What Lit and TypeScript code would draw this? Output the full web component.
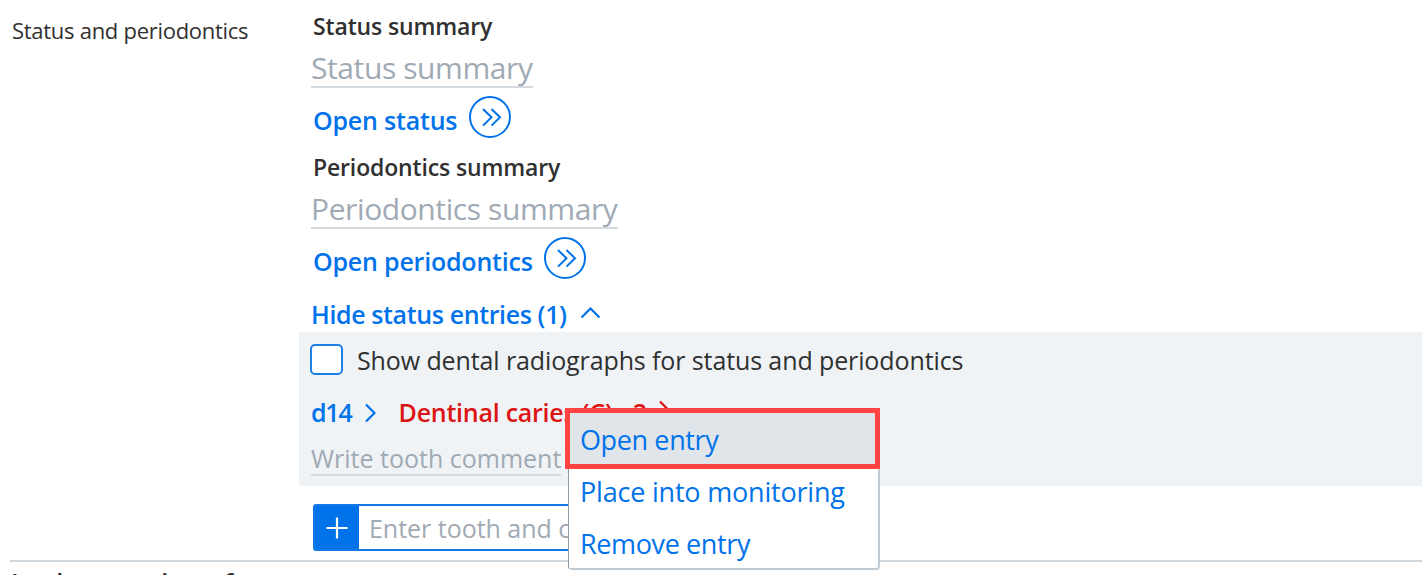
import { LitElement, html, css, svg } from 'lit';
import { customElement, property, state } from 'lit/decorators.js';

const CHEVRONS = {
  right: svg`<path d="M2 1.5 L10.5 10 L2 18.5" />`,
  up: svg`<path d="M1.5 10.5 L10.5 1.5 L19.5 10.5" />`,
};

@customElement('open-link')
export class OpenLink extends LitElement {
  @property() label = '';

  static styles = css`
    :host {
      display: flex;
      height: 42px;
      margin-top: 8px;
      padding-left: 2px;
      color: #0073ea;
    }
    .label {
      font-size: 25px;
      font-weight: 600;
      line-height: 48px;
      letter-spacing: -0.2px;
      margin-right: 11.5px;
      white-space: nowrap;
    }
    .icon {
      width: 42px;
      height: 42px;
      fill: none;
      stroke: currentColor;
      stroke-width: 2;
    }
  `;

  render() {
    return html`
      <span class="label">${this.label}</span>
      <svg class="icon" viewBox="0 0 42 42">
        <circle cx="21" cy="21" r="20" />
        <path d="M14 13 L22.5 21.3 L14 29.6 M22.5 13 L31 21.3 L22.5 29.6" />
      </svg>
    `;
  }
}

@customElement('entry-menu')
export class EntryMenu extends LitElement {
  @property({ type: Array }) items: string[] = [];
  @property({ type: Number }) active = 0;

  static styles = css`
    :host {
      display: block;
      box-sizing: border-box;
      background: #fff;
      border: 1px solid #c3cbd2;
      border-width: 1px 2px 2px 1px;
      border-left-color: #8d99a4;
      border-radius: 4px;
    }
    .item {
      height: 52px;
      padding-left: 11px;
      font-size: 27px;
      line-height: 46px;
      letter-spacing: -0.38px;
      color: #0073ea;
      white-space: nowrap;
    }
    .item.active {
      box-sizing: border-box;
      height: 61px;
      margin: -1px -2px 0 -4px;
      padding-left: 10px;
      line-height: 54px;
      background: #e0e5e9;
      border: 5px solid #ff4343;
    }
    .item.wide {
      letter-spacing: -0.2px;
    }
  `;

  render() {
    return this.items.map(
      (item, i) => html`<div class="item ${i === this.active ? 'active' : ''} ${item.length > 15 ? 'wide' : ''}">${item}</div>`
    );
  }
}

@customElement('app-root')
export class AppRoot extends LitElement {
  @state() private entries = 1;

  static styles = css`
    :host {
      display: block;
      position: relative;
      height: 575px;
      overflow: hidden;
      background: #fff;
      color: #303030;
      font-family: 'Open Sans', 'Noto Sans', sans-serif;
    }
    .section {
      display: grid;
      grid-template-columns: 289px 1fr;
      box-sizing: border-box;
      height: 562px;
      margin-left: 10px;
      border-bottom: 2px solid #d2dae0;
    }
    .section-label {
      padding: 15px 0 0 2px;
      font-size: 22px;
      line-height: 30px;
      letter-spacing: -0.28px;
      white-space: nowrap;
    }
    .content {
      min-width: 0;
    }
    .group {
      padding: 10px 0 0 12px;
    }
    .group + .group {
      padding-top: 13px;
    }
    .heading {
      padding-left: 2px;
      font-size: 23px;
      font-weight: 600;
      line-height: 32px;
      letter-spacing: -0.15px;
    }
    .summary {
      width: fit-content;
      height: 38px;
      margin-top: 6px;
      border-bottom: 2px solid #d3dae0;
      font-size: 30px;
      line-height: 40px;
      letter-spacing: -0.4px;
      color: #9faab4;
      white-space: nowrap;
    }
    .toggle {
      display: flex;
      align-items: center;
      gap: 13px;
      margin-top: 18px;
      padding-left: 12px;
      font-size: 25px;
      font-weight: 600;
      line-height: 35px;
      letter-spacing: -0.38px;
      color: #0073ea;
    }
    .chevron {
      fill: none;
      stroke: currentColor;
      stroke-width: 2.2;
    }
    .panel {
      box-sizing: border-box;
      height: 154px;
      padding: 12px 0 0 11px;
      background: #eff3f6;
    }
    .check {
      display: flex;
      gap: 14px;
      height: 31px;
      font-size: 25px;
      line-height: 33px;
      letter-spacing: -0.11px;
      white-space: nowrap;
    }
    .box {
      box-sizing: border-box;
      width: 33px;
      height: 31px;
      border: 2px solid #1c80e8;
      border-radius: 5px;
      background: #fff;
    }
    .entry {
      display: flex;
      align-items: center;
      margin-top: 20px;
      padding-left: 1px;
      font-size: 25px;
      font-weight: 600;
      line-height: 35px;
      white-space: pre;
    }
    .tooth {
      margin-right: 12px;
      letter-spacing: -1.2px;
      color: #0073ea;
    }
    .tooth-chevron {
      margin: 1px 23px 0 0;
      color: #0073ea;
    }
    .finding {
      margin-right: 11px;
      letter-spacing: -0.25px;
      color: #dc1414;
    }
    .finding-chevron {
      margin-bottom: 6px;
      color: #dc1414;
    }
    .comment {
      width: fit-content;
      margin: 12px 0 0 1px;
      border-bottom: 2px solid #d2d9df;
      font-size: 25px;
      line-height: 32px;
      letter-spacing: 0;
      color: #9faab4;
    }
    .adder {
      display: flex;
      box-sizing: border-box;
      width: 400px;
      height: 47px;
      margin: 18px 0 0 14px;
      border: 2px solid #1179e8;
      border-radius: 3px;
      overflow: hidden;
    }
    .add {
      width: 44px;
      height: 43px;
      background: #0073ea;
    }
    .hint {
      padding-left: 10px;
      font-size: 25px;
      line-height: 45px;
      letter-spacing: -0.02px;
      color: #9faab4;
      white-space: nowrap;
    }
    .next {
      padding: 3px 0 0 11px;
      font-size: 25px;
      font-weight: 600;
      line-height: 34px;
      letter-spacing: -0.6px;
      word-spacing: 6px;
      white-space: nowrap;
    }
    .menu {
      position: absolute;
      left: 568px;
      top: 408px;
      width: 312px;
      height: 162px;
    }
  `;

  render() {
    return html`
      <div class="section">
        <div class="section-label">Status and periodontics</div>
        <div class="content">
          <div class="group">
            <div class="heading">Status summary</div>
            <div class="summary">Status summary</div>
            <open-link label="Open status"></open-link>
          </div>
          <div class="group">
            <div class="heading">Periodontics summary</div>
            <div class="summary">Periodontics summary</div>
            <open-link label="Open periodontics"></open-link>
          </div>
          <div class="toggle">
            <span>Hide status entries (${this.entries})</span>
            <svg class="chevron" width="21" height="16" viewBox="0 0 21 16">${CHEVRONS.up}</svg>
          </div>
          <div class="panel">
            <div class="check">
              <span class="box"></span>
              <span>Show dental radiographs for status and periodontics</span>
            </div>
            <div class="entry">
              <span class="tooth">d14</span>
              <svg class="chevron tooth-chevron" width="12" height="20" viewBox="0 0 12 20">${CHEVRONS.right}</svg>
              <span class="finding">Dentinal caries (C) - 2</span>
              <svg class="chevron finding-chevron" width="12" height="20" viewBox="0 0 12 20">${CHEVRONS.right}</svg>
            </div>
            <div class="comment">Write tooth comment</div>
          </div>
          <div class="adder">
            <svg class="add" viewBox="0 0 44 43">
              <path d="M11.5 22 H32.5 M22 11.5 V32.5" stroke="#fff" stroke-width="2.2" />
            </svg>
            <span class="hint">Enter tooth and condition</span>
          </div>
        </div>
      </div>
      <div class="next">Implementation of</div>
      <entry-menu
        class="menu"
        .items=${['Open entry', 'Place into monitoring', 'Remove entry']}
      ></entry-menu>
    `;
  }
}
